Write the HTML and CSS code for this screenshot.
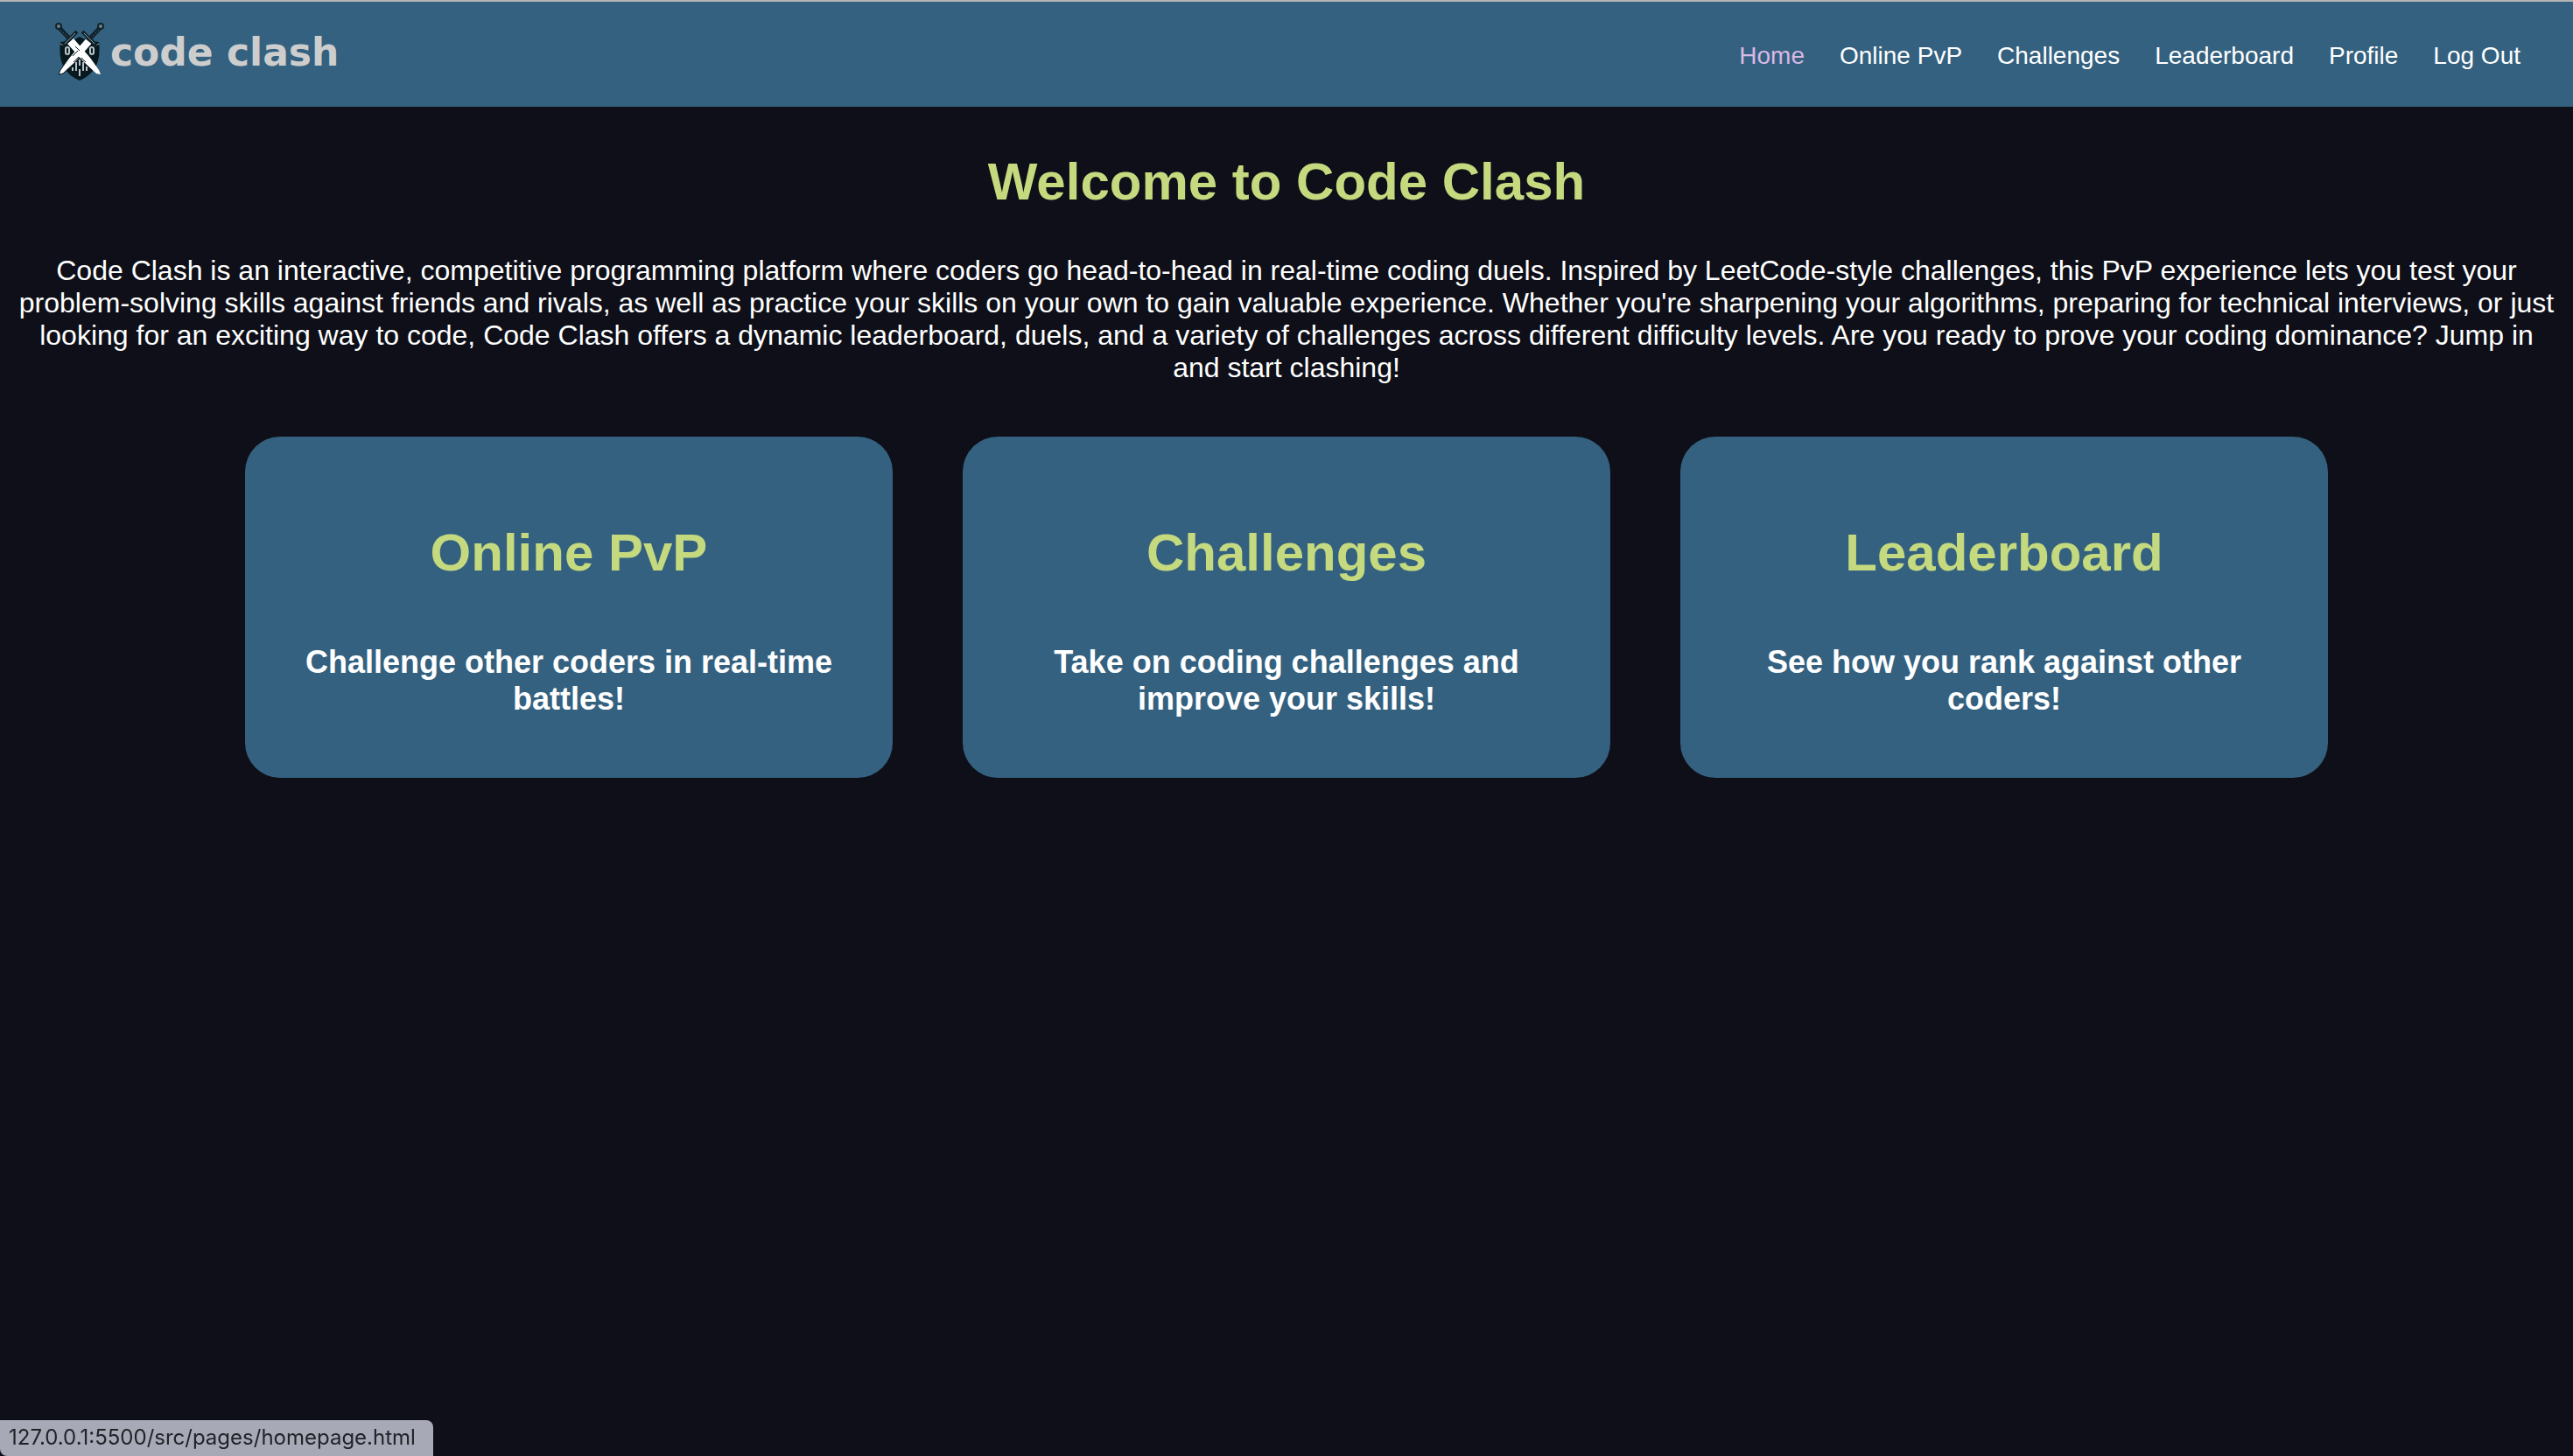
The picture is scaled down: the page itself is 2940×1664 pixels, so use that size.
FILE: index.html
```
<!DOCTYPE html>
<html lang="en">
<head>
  <meta charset="utf-8">
  <meta name="viewport" content="width=device-width, initial-scale=1">
  <title>Code Clash</title>
  <link rel="stylesheet" href="styles.css">
</head>
<body>
  <header class="navbar">
    <a class="brand" href="#">
      <svg class="brand-icon" viewBox="60 24 62 72" aria-hidden="true">
        <path d="M91 42L99 46L113 48C115 66 112 83 91 92C70 83 67 66 69 48L83 46Z" fill="#07181f"/>
        <g fill="none" stroke="#b9c3c6" stroke-width="2">
          <rect x="75" y="54" width="4" height="8" rx="2"/>
          <rect x="103" y="54" width="4" height="8" rx="2"/>
        </g>
        <path d="M83 77V81M87 71V81M91 68V75M91 79V87M95 71V81M99 76V81" stroke="#b9c3c6" stroke-width="2"/>
        <path d="M69 50L73 52M113 50L109 52" stroke="#b9c3c6" stroke-width="1"/>
        <g>
          <path d="M98 44L105 50L86 71L72 84L67 85L69 80L79 66Z" fill="#fff" stroke="#07181f" stroke-width="1"/>
          <path d="M115 31L101 46" stroke="#10232c" stroke-width="5"/>
          <path d="M113 34L103 44" stroke="#3f5d6b" stroke-width="1" stroke-dasharray="2 2"/>
          <path d="M94 36L110 52" stroke="#10232c" stroke-width="4"/>
          <path d="M96 38L108 50" stroke="#8fa0a6" stroke-width="1"/>
          <circle cx="115" cy="30" r="3" fill="#71828a" stroke="#10232c" stroke-width="2"/>
        </g>
        <g transform="translate(182 0) scale(-1 1)">
          <path d="M98 44L105 50L86 71L72 84L67 85L69 80L79 66Z" fill="#fff"/>
          <path d="M115 31L101 46" stroke="#10232c" stroke-width="5"/>
          <path d="M113 34L103 44" stroke="#3f5d6b" stroke-width="1" stroke-dasharray="2 2"/>
          <path d="M94 36L110 52" stroke="#10232c" stroke-width="4"/>
          <path d="M96 38L108 50" stroke="#8fa0a6" stroke-width="1"/>
          <circle cx="115" cy="30" r="3" fill="#71828a" stroke="#10232c" stroke-width="2"/>
        </g>
        <path d="M83 64L89 58M86 53L91 58M93 66L98 71M84 71L90 65" stroke="#07181f" stroke-width="1"/>
      </svg>
      <span class="brand-name">code clash</span>
    </a>
    <nav class="nav-links">
      <a class="active" href="#">Home</a>
      <a href="#">Online PvP</a>
      <a href="#">Challenges</a>
      <a href="#">Leaderboard</a>
      <a href="#">Profile</a>
      <a href="#">Log Out</a>
    </nav>
  </header>
  <main class="content">
    <h1 class="title">Welcome to Code Clash</h1>
    <p class="intro">Code Clash is an interactive, competitive programming platform where coders go head-to-head in real-time coding duels. Inspired by LeetCode-style challenges, this PvP experience lets you test your problem-solving skills against friends and rivals, as well as practice your skills on your own to gain valuable experience. Whether you're sharpening your algorithms, preparing for technical interviews, or just looking for an exciting way to code, Code Clash offers a dynamic leaderboard, duels, and a variety of challenges across different difficulty levels. Are you ready to prove your coding dominance? Jump in and start clashing!</p>
    <div class="cards">
      <a class="card" href="#">
        <h2 class="card-title">Online PvP</h2>
        <h3 class="card-text">Challenge other coders in real-time battles!</h3>
      </a>
      <a class="card" href="#">
        <h2 class="card-title">Challenges</h2>
        <h3 class="card-text">Take on coding challenges and improve your skills!</h3>
      </a>
      <a class="card" href="#">
        <h2 class="card-title">Leaderboard</h2>
        <h3 class="card-text">See how you rank against other coders!</h3>
      </a>
    </div>
  </main>
  <div class="status">127.0.0.1:5500/src/pages/homepage.html</div>
</body>
</html>
```
FILE: styles.css
```
* {
  box-sizing: border-box;
}

body {
  margin: 0;
  min-height: 100vh;
  background: #0e0f18;
  color: #fff;
  font-family: "Liberation Sans", Arial, sans-serif;
  font-size: 32px;
  line-height: 37px;
}

a {
  color: inherit;
  text-decoration: none;
}

.navbar {
  display: flex;
  align-items: center;
  justify-content: space-between;
  padding: 22px 60px 26px;
  background: #34617f;
  border-top: 2px solid #b4b4b4;
}

.brand {
  display: flex;
  align-items: center;
  gap: 4px;
}

.brand-icon {
  width: 62px;
  height: 72px;
}

.brand-name {
  color: #cdcdcd;
  font-family: "DejaVu Sans", sans-serif;
  font-size: 44px;
  font-weight: 700;
  line-height: 52px;
}

.nav-links {
  display: flex;
  gap: 40px;
  padding-top: 8px;
  font-size: 28px;
  line-height: 32px;
}

.nav-links .active {
  color: #d8b8e4;
}

.content {
  padding: 49px 20px;
  text-align: center;
}

.title,
.card-title {
  margin: 0;
  color: #c5d97f;
  font-size: 60px;
  line-height: 74px;
}

.intro {
  margin: 46px 0 60px;
}

.cards {
  display: grid;
  grid-template-columns: repeat(3, 1fr);
  gap: 80px;
  padding: 0 260px;
}

.card {
  padding: 96px 60px 69px;
  background: #34617f;
  border-radius: 40px;
}

.card-title {
  margin-bottom: 67px;
}

.card-text {
  margin: 0;
  font-size: 36px;
  line-height: 42px;
}

.status {
  position: fixed;
  left: 0;
  bottom: 0;
  padding: 5px 20px 6px 10px;
  background: #a7a9b7;
  color: #202327;
  border-radius: 0 8px 0 8px;
  box-shadow: 0 0 2px #000;
  font-family: Inter, sans-serif;
  font-size: 24px;
  line-height: 30px;
}
```
